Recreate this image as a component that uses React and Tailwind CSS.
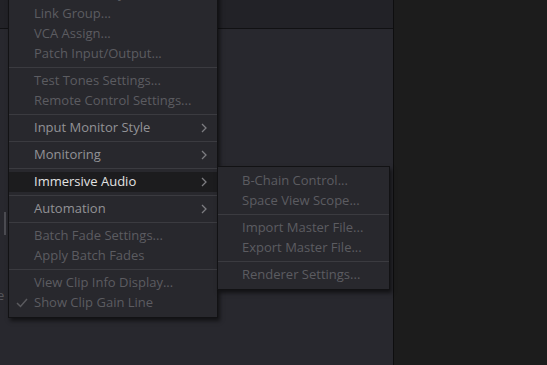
import React from 'react';

const mainItems = [
    { label: 'Presets Library...' },
    { label: 'Link Group...' },
    { label: 'VCA Assign...' },
    { label: 'Patch Input/Output...' },
    { sep: true },
    { label: 'Test Tones Settings...' },
    { label: 'Remote Control Settings...' },
    { sep: true },
    { label: 'Input Monitor Style', sub: true },
    { sep: true },
    { label: 'Monitoring', sub: true },
    { sep: true },
    { label: 'Immersive Audio', sub: true, active: true },
    { sep: true },
    { label: 'Automation', sub: true },
    { sep: true },
    { label: 'Batch Fade Settings...' },
    { label: 'Apply Batch Fades' },
    { sep: true },
    { label: 'View Clip Info Display...' },
    { label: 'Show Clip Gain Line', checked: true },
];

const subItems = [
    { label: 'B-Chain Control...' },
    { label: 'Space View Scope...' },
    { sep: true },
    { label: 'Import Master File...' },
    { label: 'Export Master File...' },
    { sep: true },
    { label: 'Renderer Settings...' },
];

const Chevron = () => (
    <svg width="6" height="10" viewBox="0 0 6 10" className="absolute right-[10px] top-[5px]">
        <polyline points="1,1 5,5 1,9" fill="none" stroke="#7c7c80" strokeWidth="1.3" />
    </svg>
);

const Check = () => (
    <svg width="12" height="10" viewBox="0 0 12 10" className="absolute left-[7px] top-[5px]">
        <polyline points="1,5 4.5,8.5 11,1" fill="none" stroke="#5a5a5e" strokeWidth="1.5" />
    </svg>
);

const MenuRow = ({ item, pad }) => {
    if (item.sep) return <div className="h-px my-[3px] bg-[#3b3b40]" />;
    let color = 'text-[#5c5c61]';
    if (item.sub) color = 'text-[#929296]';
    if (item.active) color = 'text-[#e2e2e2]';
    return (
        <div className={`relative h-[20px] leading-[18px] whitespace-nowrap ${pad} ${color} ${item.active ? 'bg-[#1c1c1e]' : ''}`}>
            {item.checked && <Check />}
            {item.label}
            {item.sub && <Chevron />}
        </div>
    );
};

export default function App() {
    return (
        <div className="relative w-[547px] h-[365px] overflow-hidden flex text-[13px]" style={{ fontFamily: '"Open Sans", "Noto Sans", sans-serif' }}>
            {/* Left panel */}
            <div className="w-[394px] flex flex-col border-r border-[#0e0e0f]">
                <div className="h-[29px] bg-[#222227] border-b border-[#111113]" />
                <div className="flex-1 bg-[#28282e] relative">
                    <div className="absolute left-[4px] top-[183px] w-[2px] h-[23px] bg-[#4c4c52]" />
                    <div className="absolute left-[-3px] top-[257px] text-[#56565b]">e</div>
                </div>
            </div>
            {/* Right panel */}
            <div className="flex-1 bg-[#1c1c1c]" />

            {/* Context menu */}
            <div className="absolute left-[8px] top-[-21px] w-[210px] pt-[4px] pb-[4px] bg-[#28282d] border border-[#121214] shadow-[2px_3px_4px_rgba(0,0,0,0.55)]">
                {mainItems.map((item, i) => (
                    <MenuRow key={i} item={item} pad="pl-[25px]" />
                ))}
            </div>

            {/* Submenu */}
            <div className="absolute left-[217px] top-[166px] w-[173px] pt-[4px] pb-[4px] bg-[#28282d] border border-[#121214] shadow-[2px_3px_4px_rgba(0,0,0,0.55)]">
                {subItems.map((item, i) => (
                    <MenuRow key={i} item={item} pad="pl-[24px]" />
                ))}
            </div>
        </div>
    );
}
